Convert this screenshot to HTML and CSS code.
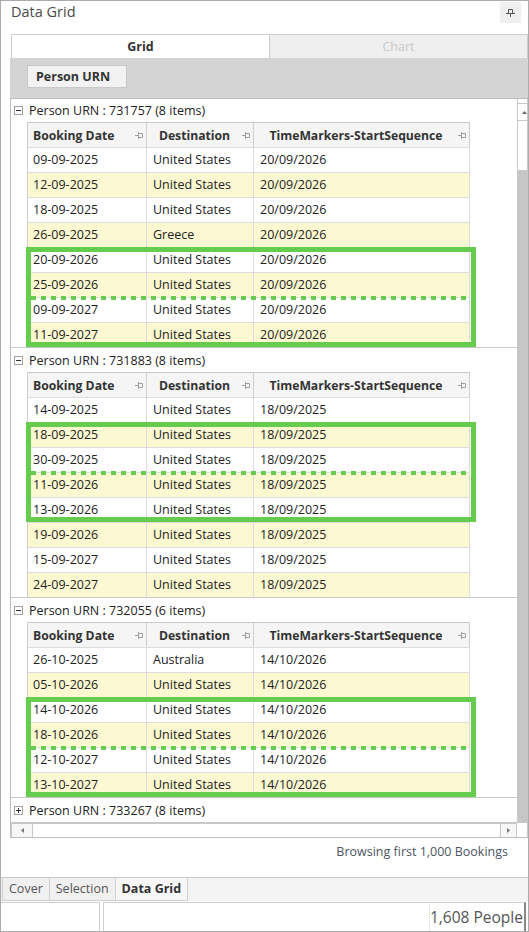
FILE: index.html
```html
<!DOCTYPE html>
<html lang="en">
<head>
    <meta charset="UTF-8">
    <meta name="viewport" content="width=device-width, initial-scale=1.0">
    <title>Data Grid</title>
    <link rel="stylesheet" href="styles.css">
</head>
<body>
<div class="pane">
    <div class="pane-head">
        <span class="pane-title">Data Grid</span>
        <span class="pin">
            <svg width="9" height="9" viewBox="0 0 9 9"><path d="M2.5 1.5H6.5V5.5M2.5 1.5V5.5M0 5.5H9M4.5 5.5V9" fill="none" stroke="#555"/></svg>
        </span>
    </div>

    <div class="view">
        <div class="view-tabs">
            <div class="vtab active">Grid</div>
            <div class="vtab off">Chart</div>
        </div>
        <div class="group-panel">
            <span class="group-chip">Person URN</span>
        </div>

        <div class="grid">
            <div class="grid-body">

                <!-- group 731757 -->
                <div class="group">
                    <div class="group-row">
                        <svg class="toggle" width="9" height="9" viewBox="0 0 9 9"><rect x=".5" y=".5" width="8" height="8" fill="#fff" stroke="#a0a0a0"/><path d="M2 4.5H7" stroke="#333"/></svg>
                        Person URN : 731757 (8 items)
                    </div>
                    <div class="table">
                        <div class="thead">
                            <div class="th first"><span class="th-label">Booking Date</span><svg class="col-pin" width="8" height="8" viewBox="0 0 8 8"><path d="M0 4.5H3M3.5 1V8M3.5 2.5H7.5V6.5H3.5" fill="none" stroke="#a0a0a0"/></svg></div>
                            <div class="th"><span class="th-label">Destination</span><svg class="col-pin" width="8" height="8" viewBox="0 0 8 8"><path d="M0 4.5H3M3.5 1V8M3.5 2.5H7.5V6.5H3.5" fill="none" stroke="#a0a0a0"/></svg></div>
                            <div class="th"><span class="th-label">TimeMarkers-StartSequence</span><svg class="col-pin" width="8" height="8" viewBox="0 0 8 8"><path d="M0 4.5H3M3.5 1V8M3.5 2.5H7.5V6.5H3.5" fill="none" stroke="#a0a0a0"/></svg></div>
                        </div>
                        <div class="rows">
                            <div class="row"><span>09-09-2025</span><span>United States</span><span>20/09/2026</span></div>
                            <div class="row alt"><span>12-09-2025</span><span>United States</span><span>20/09/2026</span></div>
                            <div class="row"><span>18-09-2025</span><span>United States</span><span>20/09/2026</span></div>
                            <div class="row alt"><span>26-09-2025</span><span>Greece</span><span>20/09/2026</span></div>
                            <div class="row"><span>20-09-2026</span><span>United States</span><span>20/09/2026</span></div>
                            <div class="row alt"><span>25-09-2026</span><span>United States</span><span>20/09/2026</span></div>
                            <div class="row"><span>09-09-2027</span><span>United States</span><span>20/09/2026</span></div>
                            <div class="row alt"><span>11-09-2027</span><span>United States</span><span>20/09/2026</span></div>
                            <div class="mark from-4"></div>
                        </div>
                    </div>
                </div>

                <!-- group 731883 -->
                <div class="group">
                    <div class="group-row">
                        <svg class="toggle" width="9" height="9" viewBox="0 0 9 9"><rect x=".5" y=".5" width="8" height="8" fill="#fff" stroke="#a0a0a0"/><path d="M2 4.5H7" stroke="#333"/></svg>
                        Person URN : 731883 (8 items)
                    </div>
                    <div class="table">
                        <div class="thead">
                            <div class="th first"><span class="th-label">Booking Date</span><svg class="col-pin" width="8" height="8" viewBox="0 0 8 8"><path d="M0 4.5H3M3.5 1V8M3.5 2.5H7.5V6.5H3.5" fill="none" stroke="#a0a0a0"/></svg></div>
                            <div class="th"><span class="th-label">Destination</span><svg class="col-pin" width="8" height="8" viewBox="0 0 8 8"><path d="M0 4.5H3M3.5 1V8M3.5 2.5H7.5V6.5H3.5" fill="none" stroke="#a0a0a0"/></svg></div>
                            <div class="th"><span class="th-label">TimeMarkers-StartSequence</span><svg class="col-pin" width="8" height="8" viewBox="0 0 8 8"><path d="M0 4.5H3M3.5 1V8M3.5 2.5H7.5V6.5H3.5" fill="none" stroke="#a0a0a0"/></svg></div>
                        </div>
                        <div class="rows">
                            <div class="row"><span>14-09-2025</span><span>United States</span><span>18/09/2025</span></div>
                            <div class="row alt"><span>18-09-2025</span><span>United States</span><span>18/09/2025</span></div>
                            <div class="row"><span>30-09-2025</span><span>United States</span><span>18/09/2025</span></div>
                            <div class="row alt"><span>11-09-2026</span><span>United States</span><span>18/09/2025</span></div>
                            <div class="row"><span>13-09-2026</span><span>United States</span><span>18/09/2025</span></div>
                            <div class="row alt"><span>19-09-2026</span><span>United States</span><span>18/09/2025</span></div>
                            <div class="row"><span>15-09-2027</span><span>United States</span><span>18/09/2025</span></div>
                            <div class="row alt"><span>24-09-2027</span><span>United States</span><span>18/09/2025</span></div>
                            <div class="mark from-1"></div>
                        </div>
                    </div>
                </div>

                <!-- group 732055 -->
                <div class="group">
                    <div class="group-row">
                        <svg class="toggle" width="9" height="9" viewBox="0 0 9 9"><rect x=".5" y=".5" width="8" height="8" fill="#fff" stroke="#a0a0a0"/><path d="M2 4.5H7" stroke="#333"/></svg>
                        Person URN : 732055 (6 items)
                    </div>
                    <div class="table">
                        <div class="thead">
                            <div class="th first"><span class="th-label">Booking Date</span><svg class="col-pin" width="8" height="8" viewBox="0 0 8 8"><path d="M0 4.5H3M3.5 1V8M3.5 2.5H7.5V6.5H3.5" fill="none" stroke="#a0a0a0"/></svg></div>
                            <div class="th"><span class="th-label">Destination</span><svg class="col-pin" width="8" height="8" viewBox="0 0 8 8"><path d="M0 4.5H3M3.5 1V8M3.5 2.5H7.5V6.5H3.5" fill="none" stroke="#a0a0a0"/></svg></div>
                            <div class="th"><span class="th-label">TimeMarkers-StartSequence</span><svg class="col-pin" width="8" height="8" viewBox="0 0 8 8"><path d="M0 4.5H3M3.5 1V8M3.5 2.5H7.5V6.5H3.5" fill="none" stroke="#a0a0a0"/></svg></div>
                        </div>
                        <div class="rows">
                            <div class="row"><span>26-10-2025</span><span>Australia</span><span>14/10/2026</span></div>
                            <div class="row alt"><span>05-10-2026</span><span>United States</span><span>14/10/2026</span></div>
                            <div class="row"><span>14-10-2026</span><span>United States</span><span>14/10/2026</span></div>
                            <div class="row alt"><span>18-10-2026</span><span>United States</span><span>14/10/2026</span></div>
                            <div class="row"><span>12-10-2027</span><span>United States</span><span>14/10/2026</span></div>
                            <div class="row alt"><span>13-10-2027</span><span>United States</span><span>14/10/2026</span></div>
                            <div class="mark from-2"></div>
                        </div>
                    </div>
                </div>

                <!-- group 733267, collapsed -->
                <div class="group">
                    <div class="group-row">
                        <svg class="toggle" width="9" height="9" viewBox="0 0 9 9"><rect x=".5" y=".5" width="8" height="8" fill="#fff" stroke="#a0a0a0"/><path d="M2 4.5H7M4.5 2V7" stroke="#333"/></svg>
                        Person URN : 733267 (8 items)
                    </div>
                </div>
            </div>

            <div class="vscroll">
                <div class="vs-cap"></div>
                <div class="vs-btn"><svg width="5" height="3" viewBox="0 0 5 3"><path d="M0 3L2.5 0L5 3Z" fill="#666"/></svg></div>
                <div class="vs-thumb"></div>
                <div class="vs-track"></div>
            </div>
            <div class="hscroll">
                <div class="hs-btn"><svg width="3" height="5" viewBox="0 0 3 5"><path d="M3 0L0 2.5L3 5Z" fill="#777"/></svg></div>
                <div class="hs-track"></div>
                <div class="hs-btn right"><svg width="3" height="5" viewBox="0 0 3 5"><path d="M0 0L3 2.5L0 5Z" fill="#777"/></svg></div>
            </div>
            <div class="corner"></div>
        </div>

        <div class="browse-note">Browsing first 1,000 Bookings</div>
    </div>

    <div class="doc-tabs">
        <div class="dtab">Cover</div>
        <div class="dtab">Selection</div>
        <div class="dtab active">Data Grid</div>
    </div>

    <div class="status">
        <div class="cell first"></div>
        <div class="cell wide"></div>
        <div class="cell count">1,608 People</div>
    </div>
</div>
</body>
</html>
```

FILE: styles.css
```css
body {
    margin: 0;
    font-family: "Open Sans", "Noto Sans", sans-serif;
    font-size: 12.5px;
    color: #222;
    background: #fff;
}

.pane {
    width: 529px;
    height: 932px;
    box-sizing: border-box;
    border: 1px solid #ababab;
    display: flex;
    flex-direction: column;
    overflow: hidden;
}

/* title bar */
.pane-head {
    height: 33px;
    display: flex;
    justify-content: space-between;
    align-items: flex-start;
    padding-left: 10px;
}
.pane-title {
    font-size: 14.5px;
    line-height: 22px;
    color: #4a4a4a;
}
.pin {
    width: 21px;
    height: 21px;
    margin-top: 1px;
    margin-right: 7px;
    background: #efefef;
    display: flex;
    align-items: center;
    justify-content: center;
}

.view {
    margin-left: 9px;
}

/* Grid / Chart switch */
.view-tabs {
    display: flex;
    height: 24px;
    padding-left: 1px;
}
.vtab {
    box-sizing: border-box;
    height: 24px;
    border: 1px solid #cfcfcf;
    border-bottom: none;
    text-align: center;
    line-height: 23px;
}
.vtab.active {
    width: 259px;
    font-weight: bold;
    color: #333;
    background: #fff;
}
.vtab.off {
    flex: 1;
    background: #efefef;
    color: #c9c9c9;
    border-left: none;
}

.group-panel {
    height: 40px;
    box-sizing: border-box;
    background: #d4d4d4;
    padding: 7px 0 0 17px;
}
.group-chip {
    display: inline-block;
    box-sizing: border-box;
    width: 100px;
    height: 23px;
    line-height: 21px;
    padding-left: 8px;
    background: #f2f2f2;
    border: 1px solid #c9c9c9;
    font-weight: bold;
    color: #333;
}

/* the grid itself */
.grid {
    display: grid;
    grid-template-columns: 1fr 10px;
    grid-template-rows: 724px 14px;
    border: 1px solid #bdbdbd;
    border-right-color: #c8c8c8;
}
.grid-body {
    overflow: hidden;
}

.group {
    border-bottom: 1px solid #c8c8c8;
}
.group-row {
    height: 24px;
    display: flex;
    align-items: center;
    gap: 6px;
    padding-left: 3px;
}
.group:first-child .group-row {
    height: 23px;
}

.table {
    margin-left: 16px;
    width: 443px;
    box-sizing: border-box;
    border-left: 1px solid #cfcfcf;
}
.thead,
.row {
    display: grid;
    grid-template-columns: 119px 107px 216px;
    height: 25px;
    box-sizing: border-box;
}
.thead {
    border-top: 1px solid #c8c8c8;
    background: #f5f5f5;
}
.th {
    display: flex;
    align-items: center;
    border-right: 1px solid #cfcfcf;
    padding-right: 3px;
}
.th-label {
    flex: 1;
    text-align: center;
    font-size: 12.2px;
    font-weight: bold;
    color: #333;
    white-space: nowrap;
}
.th.first .th-label {
    text-align: left;
    padding-left: 5px;
}

.rows {
    position: relative;
}
.row {
    border-top: 1px solid #dcdcdc;
    background: #fff;
    line-height: 23px;
}
.row.alt {
    background: #fcf8d1;
}
.row span {
    border-right: 1px solid #dcdcdc;
    padding-left: 6px;
    white-space: nowrap;
}
.row span:first-child {
    padding-left: 5px;
}

/* green highlight over four rows, split in two halves */
.mark {
    position: absolute;
    left: -2px;
    width: 450px;
    height: 100px;
    box-sizing: border-box;
    border: 5px solid #66cc4d;
}
.mark::after {
    content: "";
    position: absolute;
    left: 0;
    right: 0;
    top: 44px;
    height: 4px;
    background: repeating-linear-gradient(90deg, #66cc4d 0 5px, transparent 5px 10px);
}
.mark.from-1 { top: 25px; }
.mark.from-2 { top: 50px; }
.mark.from-4 { top: 100px; }

/* scrollbars */
.vscroll {
    display: flex;
    flex-direction: column;
    border-left: 1px solid #c8c8c8;
}
.vs-cap {
    height: 4px;
    border-bottom: 1px solid #c8c8c8;
}
.vs-btn {
    height: 16px;
    border-bottom: 1px solid #c8c8c8;
    display: flex;
    justify-content: flex-end;
    align-items: center;
}
.vs-thumb {
    height: 49px;
    background: #fff;
    border-bottom: 1px solid #c8c8c8;
}
.vs-track {
    flex: 1;
    background: #c6c6c6;
}
.hscroll {
    display: flex;
    border-top: 1px solid #c8c8c8;
}
.hs-btn {
    width: 20px;
    border-left: 1px solid #c8c8c8;
    border-right: 1px solid #c8c8c8;
    background: #f7f7f7;
    display: flex;
    align-items: center;
    justify-content: center;
}
.hs-btn.right {
    width: 15px;
}
.hs-track {
    flex: 1;
}
.corner {
    background: #fff;
}

.browse-note {
    height: 39px;
    box-sizing: border-box;
    padding: 4px 20px 0 0;
    line-height: 20px;
    text-align: right;
    color: #4b5563;
}

/* document tabs */
.doc-tabs {
    height: 24px;
    box-sizing: border-box;
    border-top: 1px solid #c8c8c8;
    background: #f4f4f4;
    display: flex;
    padding-left: 1px;
}
.dtab {
    height: 23px;
    box-sizing: border-box;
    border: 1px solid #cfcfcf;
    border-top: none;
    padding: 0 6px;
    line-height: 22px;
    font-size: 12.5px;
    color: #555;
    background: #f0f0f0;
}
.dtab + .dtab {
    border-left: none;
}
.dtab.active {
    font-weight: bold;
    color: #333;
    background: #f7f7f7;
}

/* status bar */
.status {
    height: 30px;
    display: flex;
    padding-top: 1px;
    box-sizing: border-box;
}
.cell {
    border-top: 1px solid #cfcfcf;
}
.cell.first {
    width: 98px;
    border-right: 1px solid #cfcfcf;
}
.cell.wide {
    width: 325px;
    margin-left: 3px;
    border-left: 1px solid #cfcfcf;
    border-right: 1px dotted #cfcfcf;
}
.cell.count {
    flex: 1;
    font-size: 15.5px;
    line-height: 28px;
    color: #555;
    white-space: nowrap;
    border-right: 2px solid #888;
    margin-right: 2px;
}
```
